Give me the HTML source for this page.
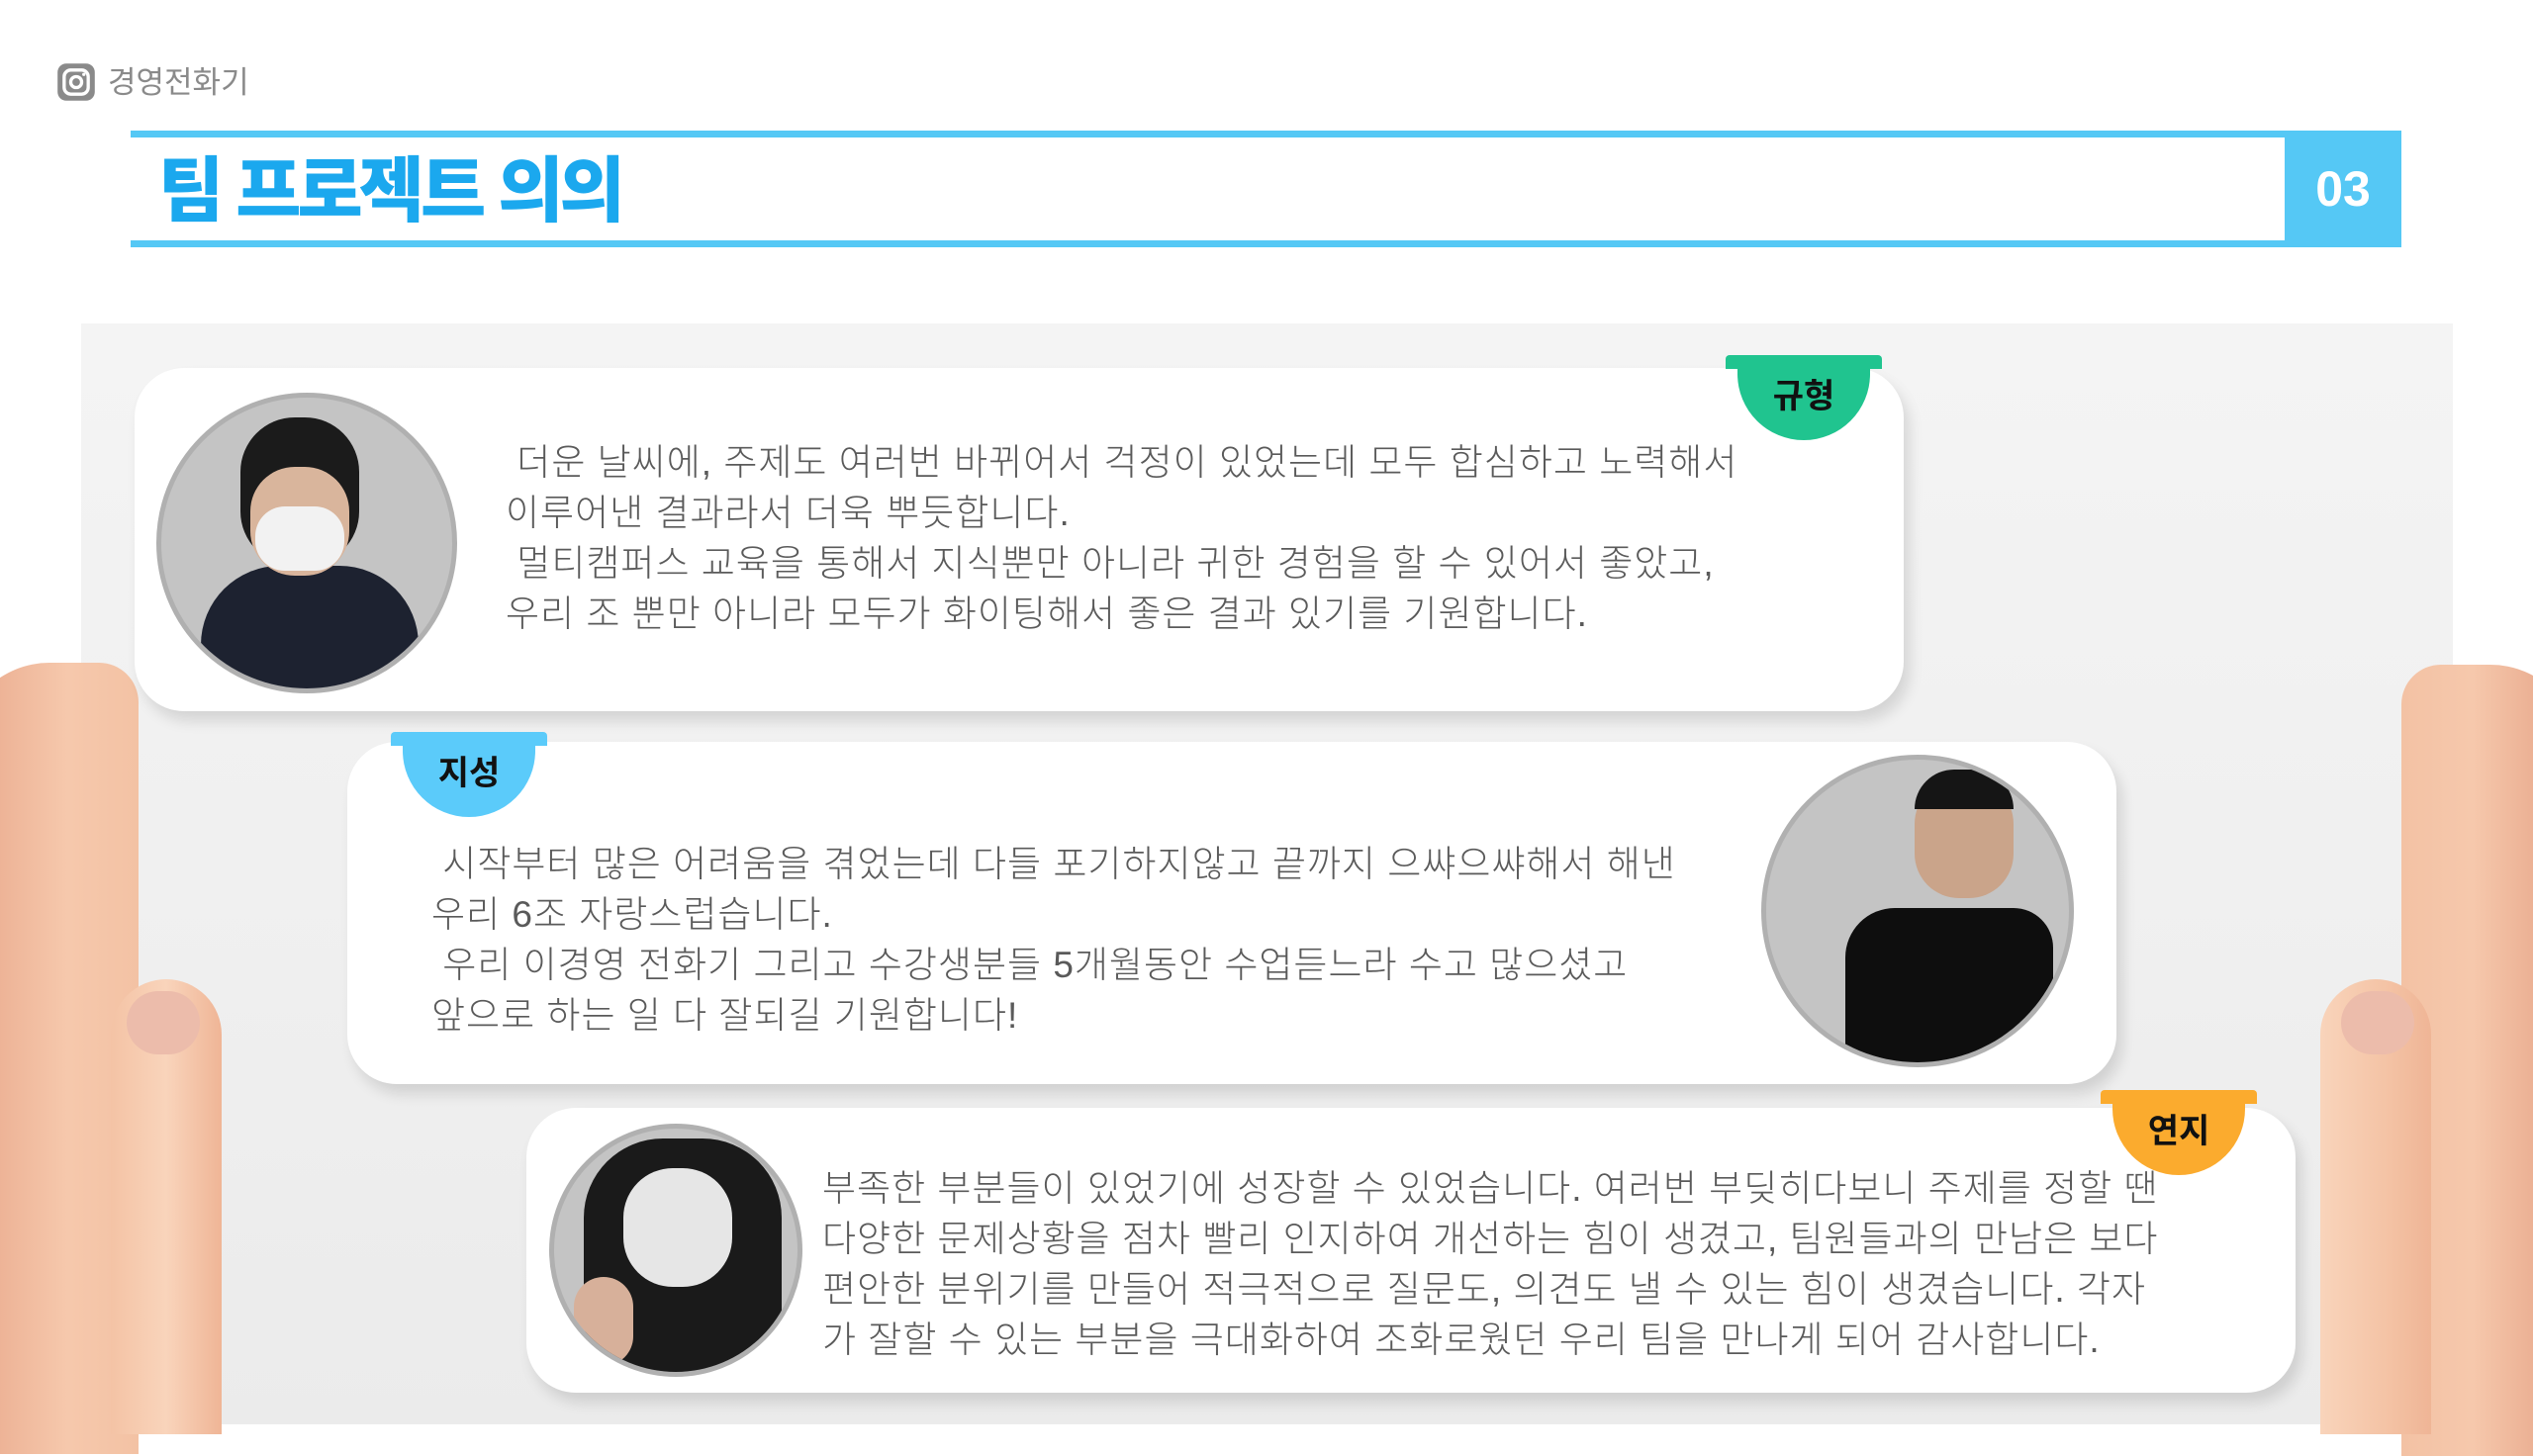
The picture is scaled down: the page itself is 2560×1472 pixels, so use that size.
<!DOCTYPE html>
<html><head><meta charset="utf-8"><style>
*{margin:0;padding:0;box-sizing:border-box}
body{width:2560px;height:1440px;background:#fff;position:relative;overflow:hidden;font-family:"Liberation Sans","Noto Sans CJK KR",sans-serif}
.abs{position:absolute}
.paper{left:82px;top:327px;width:2397px;height:1113px;background:linear-gradient(180deg,#f4f4f4,#efefef 60%,#ebebeb)}
.card{position:absolute;background:#fff;border-radius:50px;box-shadow:6px 10px 14px rgba(0,0,0,0.12)}
.txt{position:absolute;color:#5a5a5a;font-size:37px;line-height:51px;white-space:pre;font-weight:300;letter-spacing:1px}
.tag{position:absolute;width:158px;height:86px}
.tag .bar{position:absolute;left:0;top:0;width:158px;height:14px;border-radius:4px 4px 0 0}
.tag .bowl{position:absolute;left:12px;top:0;width:134px;height:86px;border-radius:0 0 67px 67px}
.tag span{position:absolute;left:0;width:158px;top:14px;text-align:center;font-size:34px;font-weight:700;color:#111}
.circ{position:absolute;border-radius:50%;background:#c4c4c4;border:5px solid #b0b0b0;overflow:hidden}
</style></head><body>
<svg class="abs" style="left:56px;top:62px" width="42" height="42" viewBox="0 0 38 38"><rect x="2" y="2" width="34" height="34" rx="8" fill="#8a8a8a"/><rect x="8" y="8" width="22" height="22" rx="6" fill="none" stroke="#fff" stroke-width="3"/><circle cx="19" cy="19" r="5" fill="none" stroke="#fff" stroke-width="3"/><circle cx="26" cy="12" r="1.5" fill="#fff"/></svg>
<div class="abs" style="left:109px;top:58px;font-size:31px;color:#8a8a8a">경영전화기</div>
<div class="abs" style="left:132px;top:132px;width:2295px;height:118px;border-top:7px solid #55c8f5;border-bottom:7px solid #55c8f5"></div>
<div class="abs" style="left:2309px;top:132px;width:118px;height:118px;background:#55c8f5;color:#fff;font-size:50px;font-weight:700;text-align:center;line-height:118px">03</div>
<div class="abs" style="left:160px;top:144px;font-size:72px;font-weight:900;color:#1ba8ee;letter-spacing:-4px;line-height:100px">팀 프로젝트 의의</div>

<div class="abs paper"></div>
<div class="abs" style="left:-40px;top:670px;width:180px;height:800px;border-radius:90px 40px 0 0;background:linear-gradient(90deg,#e8a78a,#f6c8ac 60%,#f3c2a4)"></div>
<div class="abs" style="left:112px;top:990px;width:112px;height:460px;border-radius:56px 56px 0 0;background:linear-gradient(90deg,#f4c3a5,#f9d4bb 50%,#efb596)"></div>
<div class="abs" style="left:128px;top:1002px;width:74px;height:64px;border-radius:37px;background:#ecbcab"></div>
<div class="abs" style="left:2427px;top:672px;width:180px;height:800px;border-radius:40px 90px 0 0;background:linear-gradient(90deg,#f3c2a4,#f6c8ac 40%,#e39f82)"></div>
<div class="abs" style="left:2345px;top:990px;width:112px;height:460px;border-radius:56px 56px 0 0;background:linear-gradient(90deg,#f9d4bb,#f4c3a5 60%,#efb596)"></div>
<div class="abs" style="left:2366px;top:1002px;width:74px;height:64px;border-radius:37px;background:#ecbcab"></div>

<div class="card" style="left:136px;top:372px;width:1788px;height:347px"></div>
<div class="circ" style="left:158px;top:397px;width:304px;height:304px">
<div class="abs" style="left:40px;top:170px;width:220px;height:200px;border-radius:80px 80px 0 0;background:#1d2230"></div>
<div class="abs" style="left:80px;top:20px;width:120px;height:150px;border-radius:55px;background:#1b1b1b"></div>
<div class="abs" style="left:90px;top:70px;width:100px;height:110px;border-radius:45px;background:#d9b59c"></div>
<div class="abs" style="left:95px;top:110px;width:90px;height:65px;border-radius:30px;background:#f2f2f2"></div>
</div>
<div class="txt" style="left:511px;top:442px"> 더운 날씨에, 주제도 여러번 바뀌어서 걱정이 있었는데 모두 합심하고 노력해서
이루어낸 결과라서 더욱 뿌듯합니다.
 멀티캠퍼스 교육을 통해서 지식뿐만 아니라 귀한 경험을 할 수 있어서 좋았고,
우리 조 뿐만 아니라 모두가 화이팅해서 좋은 결과 있기를 기원합니다.</div>
<div class="tag" style="left:1744px;top:359px"><div class="bar" style="background:#20c48f"></div><div class="bowl" style="background:#20c48f"></div><span>규형</span></div>

<div class="card" style="left:351px;top:750px;width:1788px;height:346px"></div>
<div class="circ" style="left:1780px;top:763px;width:316px;height:316px">
<div class="abs" style="left:80px;top:150px;width:210px;height:200px;border-radius:50px 40px 0 0;background:#0e0e0e"></div>
<div class="abs" style="left:150px;top:20px;width:100px;height:120px;border-radius:45px;background:#caa48a"></div>
<div class="abs" style="left:150px;top:10px;width:100px;height:40px;border-radius:40px 40px 0 0;background:#151515"></div>
</div>
<div class="txt" style="left:436px;top:848px"> 시작부터 많은 어려움을 겪었는데 다들 포기하지않고 끝까지 으쌰으쌰해서 해낸
우리 6조 자랑스럽습니다.
 우리 이경영 전화기 그리고 수강생분들 5개월동안 수업듣느라 수고 많으셨고
앞으로 하는 일 다 잘되길 기원합니다!</div>
<div class="tag" style="left:395px;top:740px"><div class="bar" style="background:#5bcbfa"></div><div class="bowl" style="background:#5bcbfa"></div><span>지성</span></div>

<div class="card" style="left:532px;top:1120px;width:1788px;height:288px"></div>
<div class="circ" style="left:555px;top:1136px;width:256px;height:256px">
<div class="abs" style="left:30px;top:10px;width:200px;height:260px;border-radius:80px;background:#1a1a1a"></div>
<div class="abs" style="left:70px;top:40px;width:110px;height:120px;border-radius:50px;background:#e6e6e6"></div>
<div class="abs" style="left:20px;top:150px;width:60px;height:90px;border-radius:30px;background:#d7b09a"></div>
</div>
<div class="txt" style="left:831px;top:1176px">부족한 부분들이 있었기에 성장할 수 있었습니다. 여러번 부딪히다보니 주제를 정할 땐
다양한 문제상황을 점차 빨리 인지하여 개선하는 힘이 생겼고, 팀원들과의 만남은 보다
편안한 분위기를 만들어 적극적으로 질문도, 의견도 낼 수 있는 힘이 생겼습니다. 각자
가 잘할 수 있는 부분을 극대화하여 조화로웠던 우리 팀을 만나게 되어 감사합니다.</div>
<div class="tag" style="left:2123px;top:1102px"><div class="bar" style="background:#fbab2e"></div><div class="bowl" style="background:#fbab2e"></div><span>연지</span></div>
</body></html>
